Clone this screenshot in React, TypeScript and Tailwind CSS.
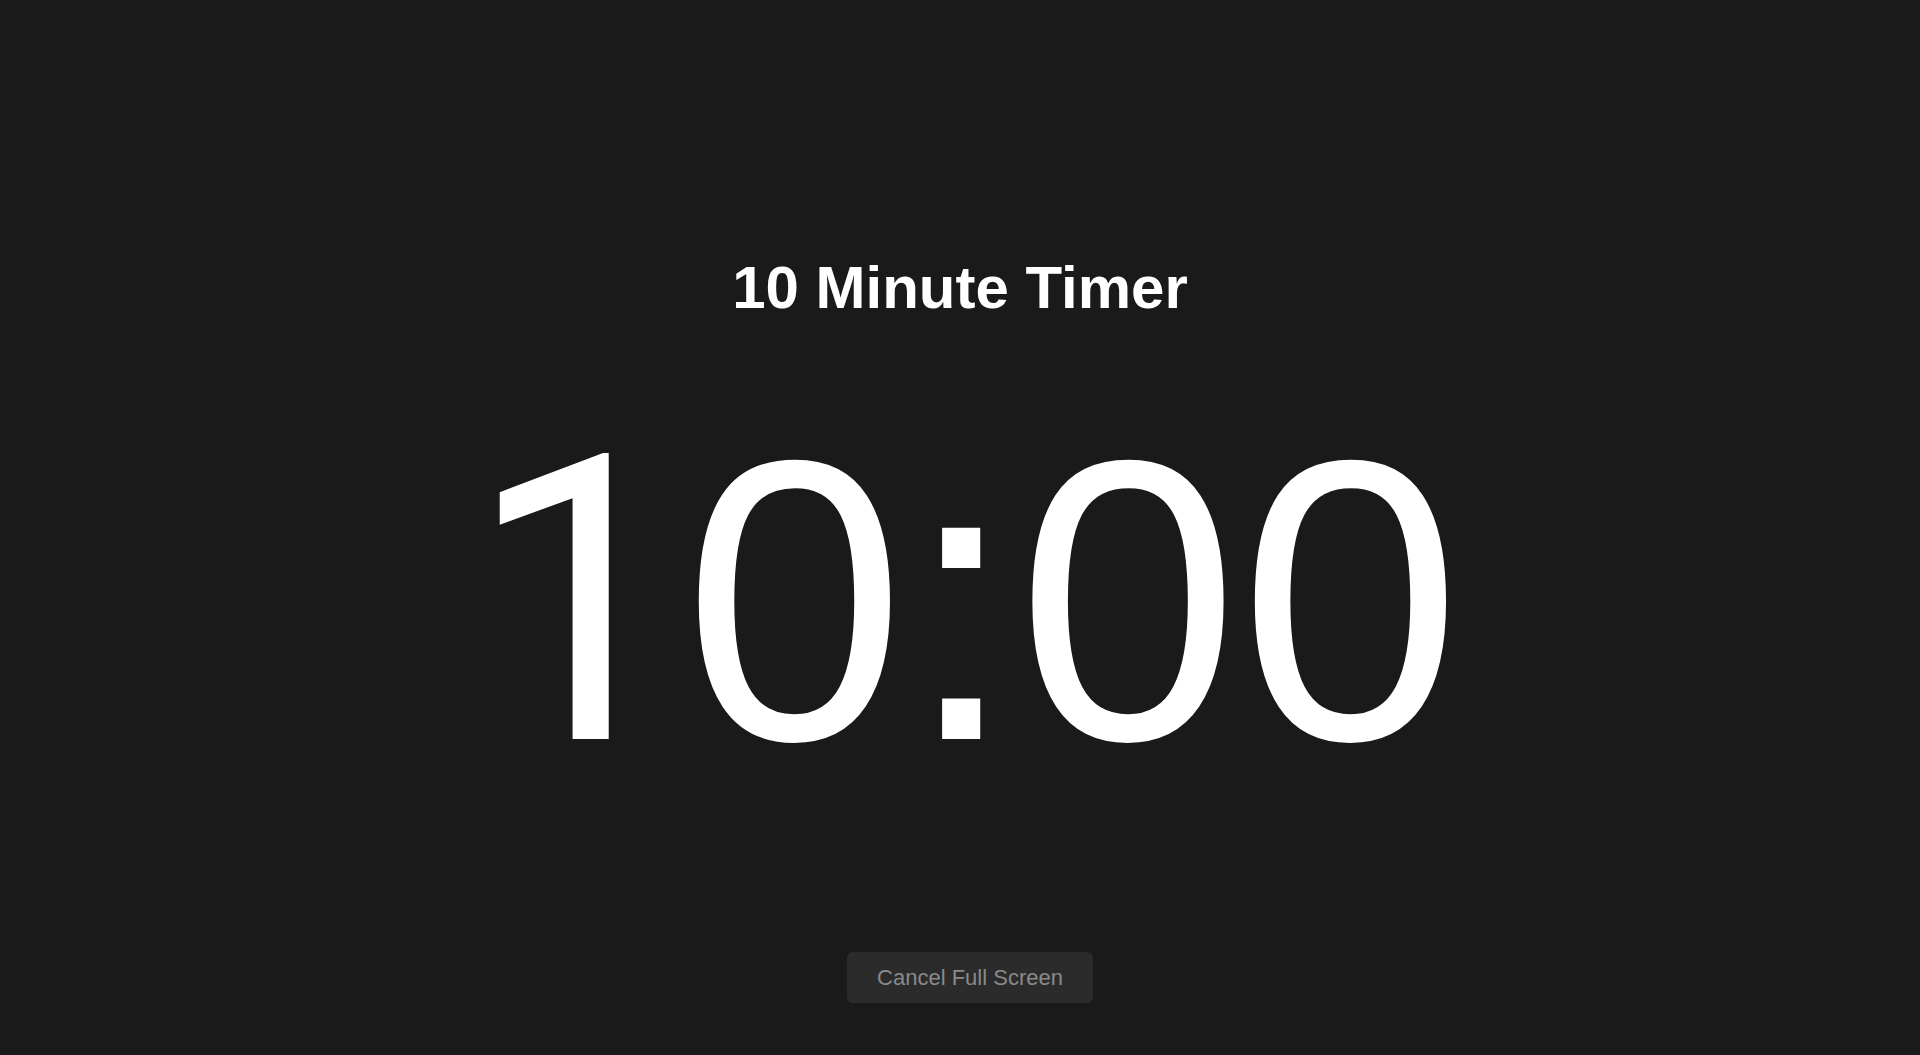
export default function App() {
  return (
    <div className="h-screen overflow-hidden bg-[#1a1a1a] flex flex-col items-center pt-[258px] font-['Liberation_Sans',Arial,sans-serif]">
      <h1 className="text-[60px] leading-none font-bold text-white">10 Minute Timer</h1>

      {/* Liberation's "1" has a foot, Roboto's is closer to Arial */}
      <div className="mt-[83px] text-[400px] leading-none text-white">
        <span className="ml-[8px] -mr-[8px] font-['Roboto',sans-serif]">1</span>0:00
      </div>

      <button className="mt-[149px] ml-[20px] h-[51px] px-[30px] rounded-md bg-[#2b2b2b] text-[22px] text-[#8a8a8a]">
        Cancel Full Screen
      </button>
    </div>
  );
}
